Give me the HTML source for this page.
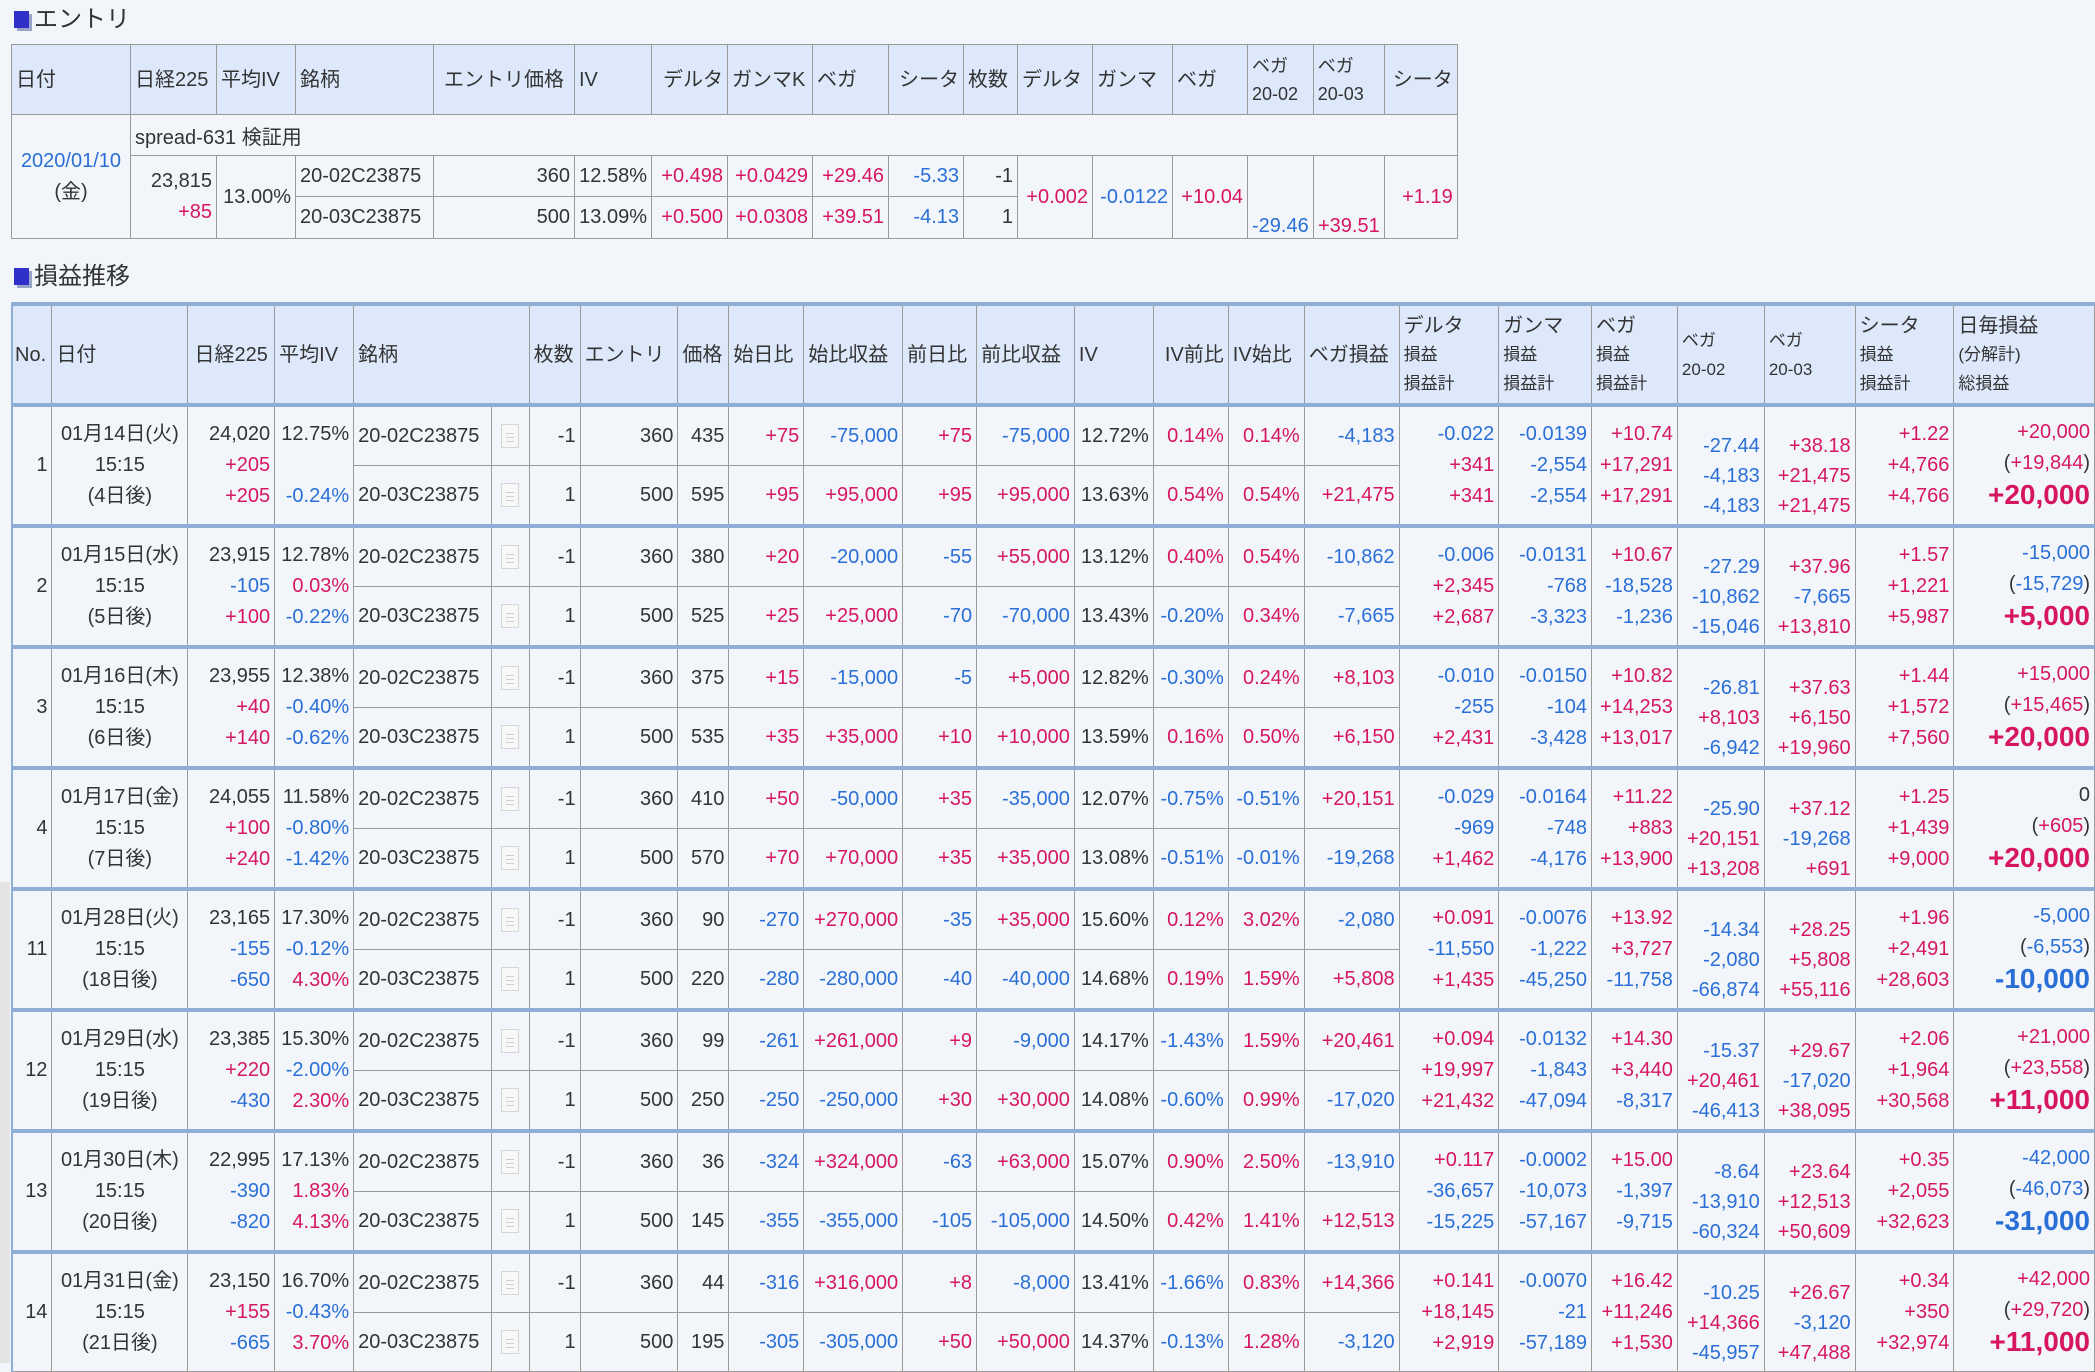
<!DOCTYPE html>
<html><head><meta charset="utf-8">
<style>
html,body{margin:0;padding:0}
body{width:2095px;height:1363px;overflow:hidden;background:#f2f6fb;font-family:"Liberation Sans","Noto Sans CJK JP",sans-serif;font-size:20px;color:#333;position:relative}
.ttl{position:absolute;left:14px;font-size:24px;line-height:30px;font-family:"Noto Sans CJK JP","Liberation Sans",sans-serif;color:#333}
.ttl i{display:inline-block;width:15px;height:17px;background:#3030c8;box-shadow:3px 3px 0 #9aa3c8;margin-right:5px;vertical-align:-1px}
table{border-collapse:collapse;table-layout:fixed;position:absolute}
td,th{border:1px solid #9a9a9a;padding:0 4px;font-weight:normal;white-space:nowrap;overflow:hidden}
th{background:#dde9fb;text-align:left;vertical-align:middle;line-height:28px}
th small{font-size:17px}
.n{text-align:right}
.c{text-align:center}
.p{color:#d6175f}
.m{color:#2a6fd6}
.l{line-height:31px}
.lo{line-height:30px;padding-top:20px}
.big{font-size:28px;font-weight:bold}
#t1{left:11px;top:44px}
#t2{left:11px;top:302px;border-left:2px solid #8eaed6}
#t2 th{border-top:4px solid #8eaed6;border-bottom:4px solid #8eaed6;height:97px}
#t2 tr.g td{border-top:4px solid #8eaed6}
#t2 tr.s td{height:58px}
#t2 tr.g td{height:58px}
.doc{display:inline-block;width:16px;height:22px;border:1px solid #d6d6d6;background:#f8f8f8 repeating-linear-gradient(to bottom,transparent 0 3px,#cfcfcf 3px 4px) no-repeat center/8px 13px;vertical-align:middle}
.ic{text-align:center;padding:0}
</style></head><body>
<div style="position:absolute;left:0;top:882px;width:10px;height:481px;background:#e4e4e4"></div>
<div class="ttl" style="top:2px"><i></i>エントリ</div>
<table id="t1">
<colgroup><col style="width:119px"><col style="width:86px"><col style="width:79px"><col style="width:138px"><col style="width:141px"><col style="width:77px"><col style="width:76px"><col style="width:85px"><col style="width:76px"><col style="width:75px"><col style="width:54px"><col style="width:75px"><col style="width:80px"><col style="width:75px"><col style="width:65px"><col style="width:71px"><col style="width:73px"></colgroup>
<tr style="height:70px"><th>日付</th><th>日経225</th><th>平均IV</th><th>銘柄</th><th class="c">エントリ価格</th><th>IV</th><th class="n">デルタ</th><th>ガンマK</th><th>ベガ</th><th class="n">シータ</th><th>枚数</th><th>デルタ</th><th>ガンマ</th><th>ベガ</th><th style="font-size:18px">ベガ<br>20-02</th><th style="font-size:18px">ベガ<br>20-03</th><th class="n">シータ</th></tr>
<tr style="height:41px"><td rowspan="3" class="c l"><span class="m">2020/01/10</span><br>(金)</td><td colspan="16">spread-631 検証用</td></tr>
<tr style="height:41px"><td rowspan="2" class="n l">23,815<br><span class="p">+85</span></td><td rowspan="2" class="n">13.00%</td><td>20-02C23875</td><td class="n">360</td><td class="n">12.58%</td><td class="n p">+0.498</td><td class="n p">+0.0429</td><td class="n p">+29.46</td><td class="n m">-5.33</td><td class="n">-1</td><td rowspan="2" class="n p">+0.002</td><td rowspan="2" class="n m">-0.0122</td><td rowspan="2" class="n p">+10.04</td><td rowspan="2" class="n m" style="vertical-align:bottom">-29.46</td><td rowspan="2" class="n p" style="vertical-align:bottom">+39.51</td><td rowspan="2" class="n p">+1.19</td></tr>
<tr style="height:42px"><td>20-03C23875</td><td class="n">500</td><td class="n">13.09%</td><td class="n p">+0.500</td><td class="n p">+0.0308</td><td class="n p">+39.51</td><td class="n m">-4.13</td><td class="n">1</td></tr>
</table>

<div class="ttl" style="top:259px"><i></i>損益推移</div>
<table id="t2">
<colgroup><col style="width:40px"><col style="width:136px"><col style="width:87px"><col style="width:79px"><col style="width:138px"><col style="width:38px"><col style="width:51px"><col style="width:98px"><col style="width:51px"><col style="width:75px"><col style="width:99px"><col style="width:74px"><col style="width:98px"><col style="width:79px"><col style="width:75px"><col style="width:76px"><col style="width:95px"><col style="width:100px"><col style="width:93px"><col style="width:86px"><col style="width:87px"><col style="width:91px"><col style="width:99px"><col style="width:141px"></colgroup>
<tr><th style="padding:0 2px">No.</th><th>日付</th><th class="c">日経225</th><th>平均IV</th><th colspan="2">銘柄</th><th>枚数</th><th>エントリ</th><th>価格</th><th>始日比</th><th>始比収益</th><th>前日比</th><th>前比収益</th><th>IV</th><th class="n">IV前比</th><th>IV始比</th><th>ベガ損益</th><th>デルタ<br><small>損益<br>損益計</small></th><th>ガンマ<br><small>損益<br>損益計</small></th><th>ベガ<br><small>損益<br>損益計</small></th><th><small>ベガ<br>20-02</small></th><th><small>ベガ<br>20-03</small></th><th>シータ<br><small>損益<br>損益計</small></th><th>日毎損益<br><small>(分解計)<br>総損益</small></th></tr>

<tr class="g"><td rowspan="2" class="n">1</td><td rowspan="2" class="c l">01月14日(火)<br>15:15<br>(4日後)</td><td rowspan="2" class="n l">24,020<br><span class="p">+205</span><br><span class="p">+205</span></td><td rowspan="2" class="n l">12.75%<br>&nbsp;<br><span class="m">-0.24%</span></td><td>20-02C23875</td><td class="ic"><span class="doc"></span></td><td class="n">-1</td><td class="n">360</td><td class="n">435</td><td class="n p">+75</td><td class="n m">-75,000</td><td class="n p">+75</td><td class="n m">-75,000</td><td class="n">12.72%</td><td class="n p">0.14%</td><td class="n p">0.14%</td><td class="n m">-4,183</td>
<td rowspan="2" class="n l"><span class="m">-0.022</span><br><span class="p">+341</span><br><span class="p">+341</span></td><td rowspan="2" class="n l"><span class="m">-0.0139</span><br><span class="m">-2,554</span><br><span class="m">-2,554</span></td><td rowspan="2" class="n l"><span class="p">+10.74</span><br><span class="p">+17,291</span><br><span class="p">+17,291</span></td><td rowspan="2" class="n lo"><span class="m">-27.44</span><br><span class="m">-4,183</span><br><span class="m">-4,183</span></td><td rowspan="2" class="n lo"><span class="p">+38.18</span><br><span class="p">+21,475</span><br><span class="p">+21,475</span></td><td rowspan="2" class="n l"><span class="p">+1.22</span><br><span class="p">+4,766</span><br><span class="p">+4,766</span></td><td rowspan="2" class="n l"><span class="p">+20,000</span><br>(<span class="p">+19,844</span>)<br><span class="p big">+20,000</span></td></tr>
<tr class="s"><td>20-03C23875</td><td class="ic"><span class="doc"></span></td><td class="n">1</td><td class="n">500</td><td class="n">595</td><td class="n p">+95</td><td class="n p">+95,000</td><td class="n p">+95</td><td class="n p">+95,000</td><td class="n">13.63%</td><td class="n p">0.54%</td><td class="n p">0.54%</td><td class="n p">+21,475</td></tr>

<tr class="g"><td rowspan="2" class="n">2</td><td rowspan="2" class="c l">01月15日(水)<br>15:15<br>(5日後)</td><td rowspan="2" class="n l">23,915<br><span class="m">-105</span><br><span class="p">+100</span></td><td rowspan="2" class="n l">12.78%<br><span class="p">0.03%</span><br><span class="m">-0.22%</span></td><td>20-02C23875</td><td class="ic"><span class="doc"></span></td><td class="n">-1</td><td class="n">360</td><td class="n">380</td><td class="n p">+20</td><td class="n m">-20,000</td><td class="n m">-55</td><td class="n p">+55,000</td><td class="n">13.12%</td><td class="n p">0.40%</td><td class="n p">0.54%</td><td class="n m">-10,862</td>
<td rowspan="2" class="n l"><span class="m">-0.006</span><br><span class="p">+2,345</span><br><span class="p">+2,687</span></td><td rowspan="2" class="n l"><span class="m">-0.0131</span><br><span class="m">-768</span><br><span class="m">-3,323</span></td><td rowspan="2" class="n l"><span class="p">+10.67</span><br><span class="m">-18,528</span><br><span class="m">-1,236</span></td><td rowspan="2" class="n lo"><span class="m">-27.29</span><br><span class="m">-10,862</span><br><span class="m">-15,046</span></td><td rowspan="2" class="n lo"><span class="p">+37.96</span><br><span class="m">-7,665</span><br><span class="p">+13,810</span></td><td rowspan="2" class="n l"><span class="p">+1.57</span><br><span class="p">+1,221</span><br><span class="p">+5,987</span></td><td rowspan="2" class="n l"><span class="m">-15,000</span><br>(<span class="m">-15,729</span>)<br><span class="p big">+5,000</span></td></tr>
<tr class="s"><td>20-03C23875</td><td class="ic"><span class="doc"></span></td><td class="n">1</td><td class="n">500</td><td class="n">525</td><td class="n p">+25</td><td class="n p">+25,000</td><td class="n m">-70</td><td class="n m">-70,000</td><td class="n">13.43%</td><td class="n m">-0.20%</td><td class="n p">0.34%</td><td class="n m">-7,665</td></tr>

<tr class="g"><td rowspan="2" class="n">3</td><td rowspan="2" class="c l">01月16日(木)<br>15:15<br>(6日後)</td><td rowspan="2" class="n l">23,955<br><span class="p">+40</span><br><span class="p">+140</span></td><td rowspan="2" class="n l">12.38%<br><span class="m">-0.40%</span><br><span class="m">-0.62%</span></td><td>20-02C23875</td><td class="ic"><span class="doc"></span></td><td class="n">-1</td><td class="n">360</td><td class="n">375</td><td class="n p">+15</td><td class="n m">-15,000</td><td class="n m">-5</td><td class="n p">+5,000</td><td class="n">12.82%</td><td class="n m">-0.30%</td><td class="n p">0.24%</td><td class="n p">+8,103</td>
<td rowspan="2" class="n l"><span class="m">-0.010</span><br><span class="m">-255</span><br><span class="p">+2,431</span></td><td rowspan="2" class="n l"><span class="m">-0.0150</span><br><span class="m">-104</span><br><span class="m">-3,428</span></td><td rowspan="2" class="n l"><span class="p">+10.82</span><br><span class="p">+14,253</span><br><span class="p">+13,017</span></td><td rowspan="2" class="n lo"><span class="m">-26.81</span><br><span class="p">+8,103</span><br><span class="m">-6,942</span></td><td rowspan="2" class="n lo"><span class="p">+37.63</span><br><span class="p">+6,150</span><br><span class="p">+19,960</span></td><td rowspan="2" class="n l"><span class="p">+1.44</span><br><span class="p">+1,572</span><br><span class="p">+7,560</span></td><td rowspan="2" class="n l"><span class="p">+15,000</span><br>(<span class="p">+15,465</span>)<br><span class="p big">+20,000</span></td></tr>
<tr class="s"><td>20-03C23875</td><td class="ic"><span class="doc"></span></td><td class="n">1</td><td class="n">500</td><td class="n">535</td><td class="n p">+35</td><td class="n p">+35,000</td><td class="n p">+10</td><td class="n p">+10,000</td><td class="n">13.59%</td><td class="n p">0.16%</td><td class="n p">0.50%</td><td class="n p">+6,150</td></tr>

<tr class="g"><td rowspan="2" class="n">4</td><td rowspan="2" class="c l">01月17日(金)<br>15:15<br>(7日後)</td><td rowspan="2" class="n l">24,055<br><span class="p">+100</span><br><span class="p">+240</span></td><td rowspan="2" class="n l">11.58%<br><span class="m">-0.80%</span><br><span class="m">-1.42%</span></td><td>20-02C23875</td><td class="ic"><span class="doc"></span></td><td class="n">-1</td><td class="n">360</td><td class="n">410</td><td class="n p">+50</td><td class="n m">-50,000</td><td class="n p">+35</td><td class="n m">-35,000</td><td class="n">12.07%</td><td class="n m">-0.75%</td><td class="n m">-0.51%</td><td class="n p">+20,151</td>
<td rowspan="2" class="n l"><span class="m">-0.029</span><br><span class="m">-969</span><br><span class="p">+1,462</span></td><td rowspan="2" class="n l"><span class="m">-0.0164</span><br><span class="m">-748</span><br><span class="m">-4,176</span></td><td rowspan="2" class="n l"><span class="p">+11.22</span><br><span class="p">+883</span><br><span class="p">+13,900</span></td><td rowspan="2" class="n lo"><span class="m">-25.90</span><br><span class="p">+20,151</span><br><span class="p">+13,208</span></td><td rowspan="2" class="n lo"><span class="p">+37.12</span><br><span class="m">-19,268</span><br><span class="p">+691</span></td><td rowspan="2" class="n l"><span class="p">+1.25</span><br><span class="p">+1,439</span><br><span class="p">+9,000</span></td><td rowspan="2" class="n l">0<br>(<span class="p">+605</span>)<br><span class="p big">+20,000</span></td></tr>
<tr class="s"><td>20-03C23875</td><td class="ic"><span class="doc"></span></td><td class="n">1</td><td class="n">500</td><td class="n">570</td><td class="n p">+70</td><td class="n p">+70,000</td><td class="n p">+35</td><td class="n p">+35,000</td><td class="n">13.08%</td><td class="n m">-0.51%</td><td class="n m">-0.01%</td><td class="n m">-19,268</td></tr>

<tr class="g"><td rowspan="2" class="n">11</td><td rowspan="2" class="c l">01月28日(火)<br>15:15<br>(18日後)</td><td rowspan="2" class="n l">23,165<br><span class="m">-155</span><br><span class="m">-650</span></td><td rowspan="2" class="n l">17.30%<br><span class="m">-0.12%</span><br><span class="p">4.30%</span></td><td>20-02C23875</td><td class="ic"><span class="doc"></span></td><td class="n">-1</td><td class="n">360</td><td class="n">90</td><td class="n m">-270</td><td class="n p">+270,000</td><td class="n m">-35</td><td class="n p">+35,000</td><td class="n">15.60%</td><td class="n p">0.12%</td><td class="n p">3.02%</td><td class="n m">-2,080</td>
<td rowspan="2" class="n l"><span class="p">+0.091</span><br><span class="m">-11,550</span><br><span class="p">+1,435</span></td><td rowspan="2" class="n l"><span class="m">-0.0076</span><br><span class="m">-1,222</span><br><span class="m">-45,250</span></td><td rowspan="2" class="n l"><span class="p">+13.92</span><br><span class="p">+3,727</span><br><span class="m">-11,758</span></td><td rowspan="2" class="n lo"><span class="m">-14.34</span><br><span class="m">-2,080</span><br><span class="m">-66,874</span></td><td rowspan="2" class="n lo"><span class="p">+28.25</span><br><span class="p">+5,808</span><br><span class="p">+55,116</span></td><td rowspan="2" class="n l"><span class="p">+1.96</span><br><span class="p">+2,491</span><br><span class="p">+28,603</span></td><td rowspan="2" class="n l"><span class="m">-5,000</span><br>(<span class="m">-6,553</span>)<br><span class="m big">-10,000</span></td></tr>
<tr class="s"><td>20-03C23875</td><td class="ic"><span class="doc"></span></td><td class="n">1</td><td class="n">500</td><td class="n">220</td><td class="n m">-280</td><td class="n m">-280,000</td><td class="n m">-40</td><td class="n m">-40,000</td><td class="n">14.68%</td><td class="n p">0.19%</td><td class="n p">1.59%</td><td class="n p">+5,808</td></tr>

<tr class="g"><td rowspan="2" class="n">12</td><td rowspan="2" class="c l">01月29日(水)<br>15:15<br>(19日後)</td><td rowspan="2" class="n l">23,385<br><span class="p">+220</span><br><span class="m">-430</span></td><td rowspan="2" class="n l">15.30%<br><span class="m">-2.00%</span><br><span class="p">2.30%</span></td><td>20-02C23875</td><td class="ic"><span class="doc"></span></td><td class="n">-1</td><td class="n">360</td><td class="n">99</td><td class="n m">-261</td><td class="n p">+261,000</td><td class="n p">+9</td><td class="n m">-9,000</td><td class="n">14.17%</td><td class="n m">-1.43%</td><td class="n p">1.59%</td><td class="n p">+20,461</td>
<td rowspan="2" class="n l"><span class="p">+0.094</span><br><span class="p">+19,997</span><br><span class="p">+21,432</span></td><td rowspan="2" class="n l"><span class="m">-0.0132</span><br><span class="m">-1,843</span><br><span class="m">-47,094</span></td><td rowspan="2" class="n l"><span class="p">+14.30</span><br><span class="p">+3,440</span><br><span class="m">-8,317</span></td><td rowspan="2" class="n lo"><span class="m">-15.37</span><br><span class="p">+20,461</span><br><span class="m">-46,413</span></td><td rowspan="2" class="n lo"><span class="p">+29.67</span><br><span class="m">-17,020</span><br><span class="p">+38,095</span></td><td rowspan="2" class="n l"><span class="p">+2.06</span><br><span class="p">+1,964</span><br><span class="p">+30,568</span></td><td rowspan="2" class="n l"><span class="p">+21,000</span><br>(<span class="p">+23,558</span>)<br><span class="p big">+11,000</span></td></tr>
<tr class="s"><td>20-03C23875</td><td class="ic"><span class="doc"></span></td><td class="n">1</td><td class="n">500</td><td class="n">250</td><td class="n m">-250</td><td class="n m">-250,000</td><td class="n p">+30</td><td class="n p">+30,000</td><td class="n">14.08%</td><td class="n m">-0.60%</td><td class="n p">0.99%</td><td class="n m">-17,020</td></tr>

<tr class="g"><td rowspan="2" class="n">13</td><td rowspan="2" class="c l">01月30日(木)<br>15:15<br>(20日後)</td><td rowspan="2" class="n l">22,995<br><span class="m">-390</span><br><span class="m">-820</span></td><td rowspan="2" class="n l">17.13%<br><span class="p">1.83%</span><br><span class="p">4.13%</span></td><td>20-02C23875</td><td class="ic"><span class="doc"></span></td><td class="n">-1</td><td class="n">360</td><td class="n">36</td><td class="n m">-324</td><td class="n p">+324,000</td><td class="n m">-63</td><td class="n p">+63,000</td><td class="n">15.07%</td><td class="n p">0.90%</td><td class="n p">2.50%</td><td class="n m">-13,910</td>
<td rowspan="2" class="n l"><span class="p">+0.117</span><br><span class="m">-36,657</span><br><span class="m">-15,225</span></td><td rowspan="2" class="n l"><span class="m">-0.0002</span><br><span class="m">-10,073</span><br><span class="m">-57,167</span></td><td rowspan="2" class="n l"><span class="p">+15.00</span><br><span class="m">-1,397</span><br><span class="m">-9,715</span></td><td rowspan="2" class="n lo"><span class="m">-8.64</span><br><span class="m">-13,910</span><br><span class="m">-60,324</span></td><td rowspan="2" class="n lo"><span class="p">+23.64</span><br><span class="p">+12,513</span><br><span class="p">+50,609</span></td><td rowspan="2" class="n l"><span class="p">+0.35</span><br><span class="p">+2,055</span><br><span class="p">+32,623</span></td><td rowspan="2" class="n l"><span class="m">-42,000</span><br>(<span class="m">-46,073</span>)<br><span class="m big">-31,000</span></td></tr>
<tr class="s"><td>20-03C23875</td><td class="ic"><span class="doc"></span></td><td class="n">1</td><td class="n">500</td><td class="n">145</td><td class="n m">-355</td><td class="n m">-355,000</td><td class="n m">-105</td><td class="n m">-105,000</td><td class="n">14.50%</td><td class="n p">0.42%</td><td class="n p">1.41%</td><td class="n p">+12,513</td></tr>

<tr class="g"><td rowspan="2" class="n">14</td><td rowspan="2" class="c l">01月31日(金)<br>15:15<br>(21日後)</td><td rowspan="2" class="n l">23,150<br><span class="p">+155</span><br><span class="m">-665</span></td><td rowspan="2" class="n l">16.70%<br><span class="m">-0.43%</span><br><span class="p">3.70%</span></td><td>20-02C23875</td><td class="ic"><span class="doc"></span></td><td class="n">-1</td><td class="n">360</td><td class="n">44</td><td class="n m">-316</td><td class="n p">+316,000</td><td class="n p">+8</td><td class="n m">-8,000</td><td class="n">13.41%</td><td class="n m">-1.66%</td><td class="n p">0.83%</td><td class="n p">+14,366</td>
<td rowspan="2" class="n l"><span class="p">+0.141</span><br><span class="p">+18,145</span><br><span class="p">+2,919</span></td><td rowspan="2" class="n l"><span class="m">-0.0070</span><br><span class="m">-21</span><br><span class="m">-57,189</span></td><td rowspan="2" class="n l"><span class="p">+16.42</span><br><span class="p">+11,246</span><br><span class="p">+1,530</span></td><td rowspan="2" class="n lo"><span class="m">-10.25</span><br><span class="p">+14,366</span><br><span class="m">-45,957</span></td><td rowspan="2" class="n lo"><span class="p">+26.67</span><br><span class="m">-3,120</span><br><span class="p">+47,488</span></td><td rowspan="2" class="n l"><span class="p">+0.34</span><br><span class="p">+350</span><br><span class="p">+32,974</span></td><td rowspan="2" class="n l"><span class="p">+42,000</span><br>(<span class="p">+29,720</span>)<br><span class="p big">+11,000</span></td></tr>
<tr class="s"><td>20-03C23875</td><td class="ic"><span class="doc"></span></td><td class="n">1</td><td class="n">500</td><td class="n">195</td><td class="n m">-305</td><td class="n m">-305,000</td><td class="n p">+50</td><td class="n p">+50,000</td><td class="n">14.37%</td><td class="n m">-0.13%</td><td class="n p">1.28%</td><td class="n m">-3,120</td></tr>
</table>
</body></html>
